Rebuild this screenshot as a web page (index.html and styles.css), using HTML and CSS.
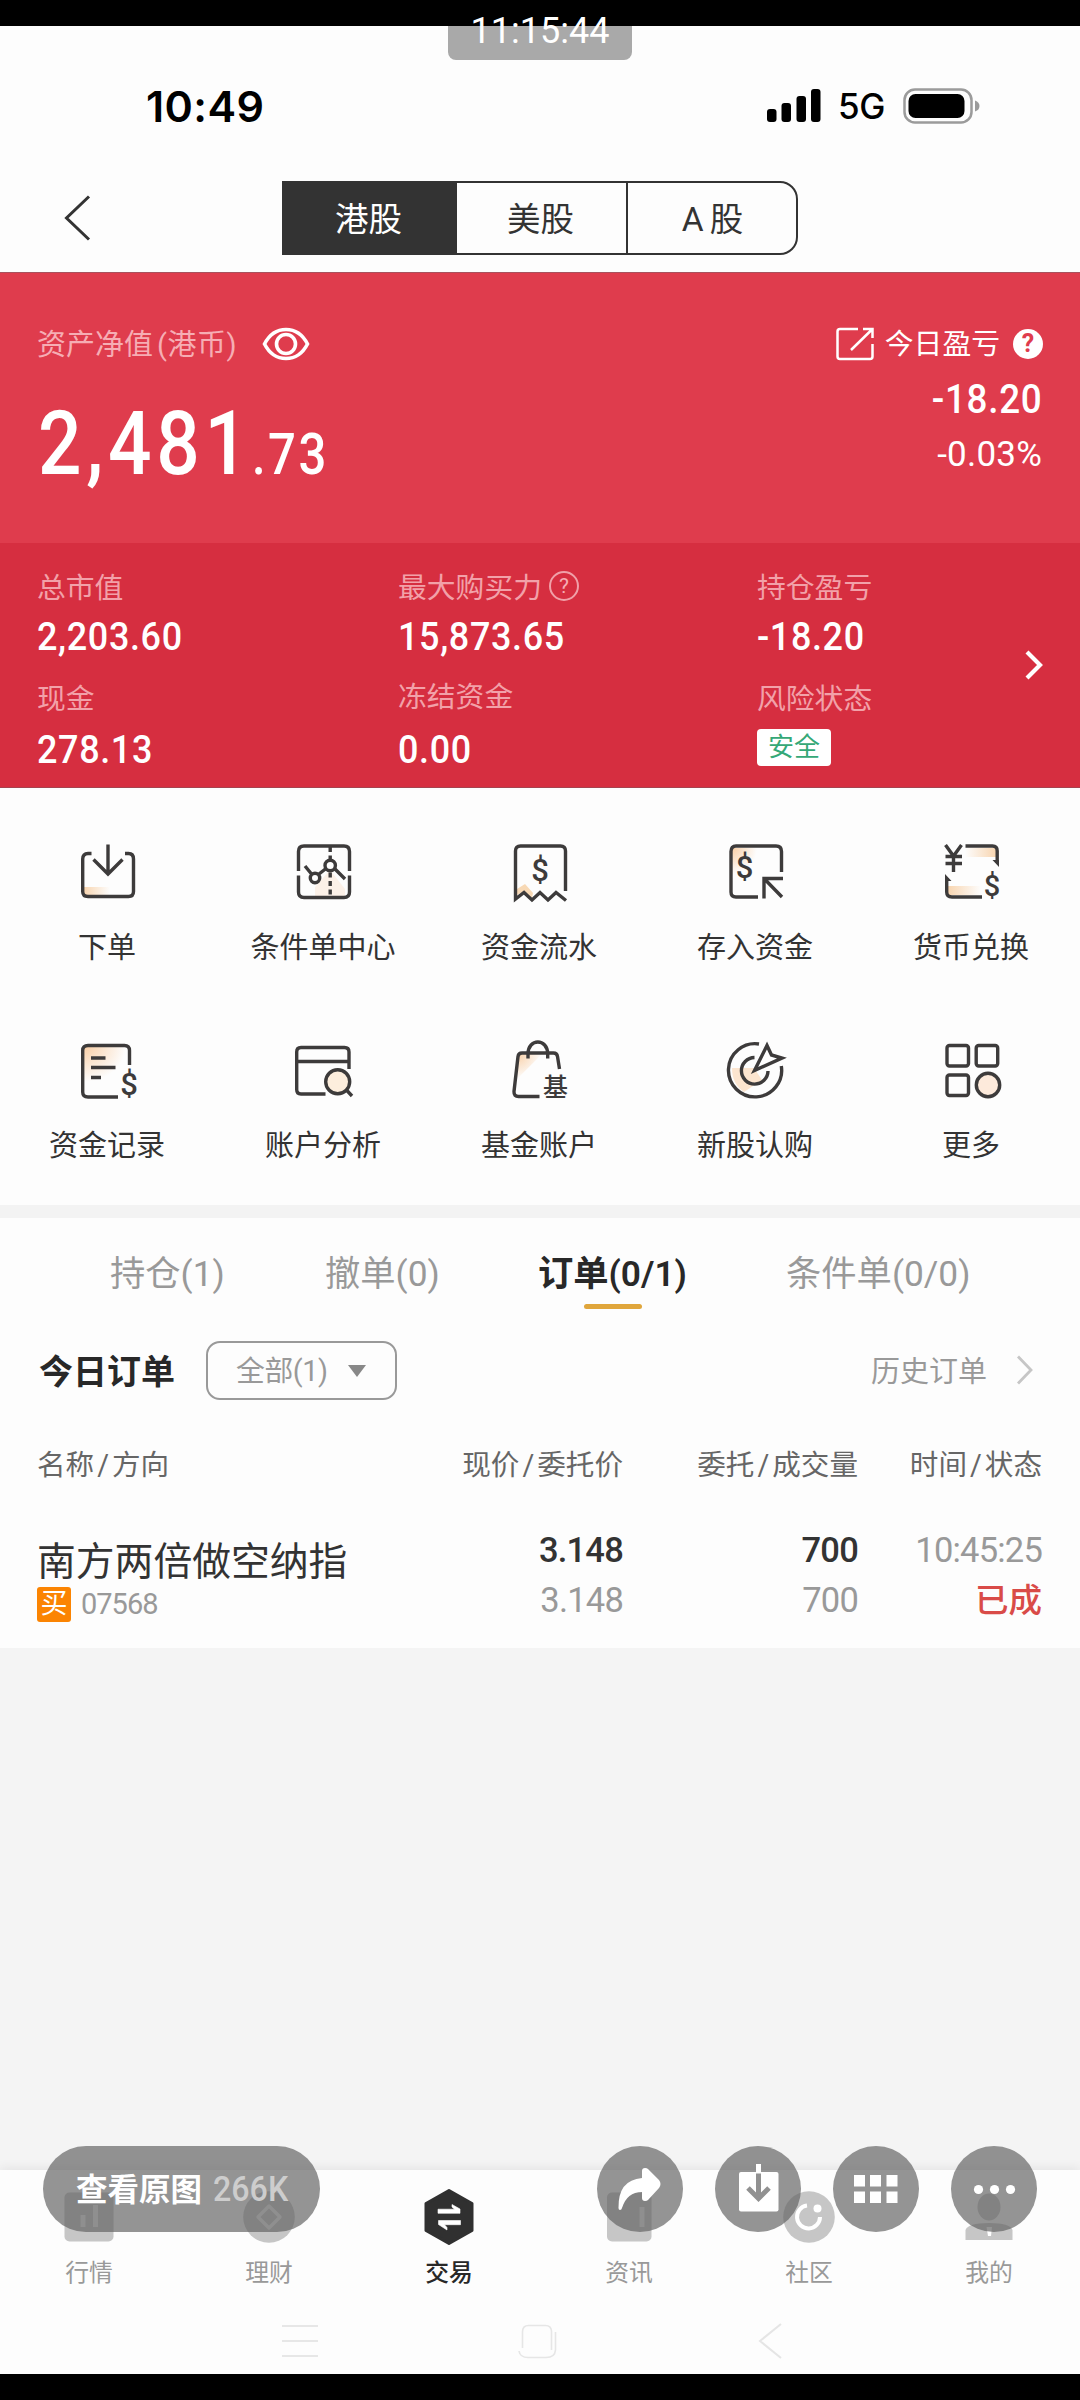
FILE: index.html
```html
<!DOCTYPE html>
<html lang="zh-CN">
<head>
<meta charset="utf-8">
<title>交易</title>
<link rel="stylesheet" href="styles.css">
</head>
<body>
<svg width="0" height="0" class="defs">
  <defs>
    <linearGradient id="warm" x1="0" y1="0" x2="1" y2="0"><stop offset="0" stop-color="#f8d5b0"/><stop offset="1" stop-color="#f8d5b0" stop-opacity="0"/></linearGradient>
    <linearGradient id="warmR" x1="1" y1="0" x2="0" y2="0"><stop offset="0" stop-color="#f8d5b0"/><stop offset="1" stop-color="#f8d5b0" stop-opacity="0"/></linearGradient>
    <radialGradient id="warmTL" cx="0" cy="0" r="1"><stop offset="0" stop-color="#f9cfa6"/><stop offset="1" stop-color="#f9cfa6" stop-opacity="0"/></radialGradient>
  </defs>
</svg>
<div class="screen">
  <header class="status">
    <span class="time">10:49</span>
    <div class="signals">
      <svg width="54" height="36" viewBox="0 0 54 36"><rect y="21" width="9.500" height="13" rx="3"/><rect x="14.500" y="15" width="9.500" height="19" rx="3"/><rect x="29.500" y="8" width="9.500" height="26" rx="3"/><rect x="44" y="1" width="9.500" height="33" rx="3"/></svg>
      <span class="net">5G</span>
      <svg width="78" height="36" viewBox="0 0 78 36"><rect x="1.500" y="1.500" width="67" height="33" rx="10.500" fill="none" stroke="#9b9b9b" stroke-width="2.500"/><rect x="5.500" y="6" width="56" height="24" rx="7"/><path d="M72 12.500q4.500 1.500 4.500 5.500t-4.500 5.500z" fill="#9b9b9b"/></svg>
    </div>
  </header>
  <nav class="market">
    <svg class="back" width="30" height="50" viewBox="0 0 30 50"><path d="M27 3.500 4.500 25 27 46.500" fill="none" stroke="#333" stroke-width="3"/></svg>
    <div class="segments"><span class="seg on">港股</span><span class="seg">美股</span><span class="seg a">A 股</span></div>
  </nav>

  <section class="assets">
    <div class="net-worth">
      <div class="label-line"><span>资产净值</span><span class="paren">(港币)</span>
        <svg width="48" height="34" viewBox="0 0 48 34" fill="none" stroke="#fff" stroke-width="3.600"><path d="M2.500 17Q10 2.500 24 2.500T45.500 17Q38 31.500 24 31.500T2.500 17Z"/><circle cx="24" cy="17" r="9.500"/></svg>
      </div>
      <div class="amount">2,481<small>.73</small></div>
    </div>
    <div class="today">
      <div class="today-title">
        <svg width="38" height="34" viewBox="0 0 38 34" fill="none" stroke="#fff" stroke-width="2.500"><path d="M22 2H4Q1.500 2 1.500 4.500V29.500Q1.500 32 4 32H34Q36.500 32 36.500 29.500V17M27 2H36.500V11M36.500 2 15 23"/></svg>
        <span>今日盈亏</span>
        <span class="help solid">?</span>
      </div>
      <div class="today-value">-18.20</div>
      <div class="today-rate">-0.03%</div>
    </div>
  </section>

  <section class="stats">
    <div class="stat"><span class="k">总市值</span><b>2,203.60</b></div>
    <div class="stat"><span class="k">最大购买力<span class="help">?</span></span><b>15,873.65</b></div>
    <div class="stat"><span class="k">持仓盈亏</span><b>-18.20</b></div>
    <div class="stat low"><span class="k">现金</span><b>278.13</b></div>
    <div class="stat low"><span class="k raised">冻结资金</span><b>0.00</b></div>
    <div class="stat low"><span class="k">风险状态</span><span class="safe">安全</span></div>
    <svg class="more" width="20" height="34" viewBox="0 0 20 34"><path d="M3 4 16 17 3 30" fill="none" stroke="#fff" stroke-width="4.200"/></svg>
  </section>

  <section class="actions">
    <div class="action"><svg class="ico" viewBox="0 0 64 64"><path d="M8 46H34V54H8Z" fill="url(#warm)" stroke="none"/><path d="M15.500 12.500H12Q6.700 12.500 6.700 18V50.500Q6.700 55.500 12 55.500H52.500Q57.500 55.500 57.500 50.500V18Q57.500 12.500 52.500 12.500H49M32 3.500V32M17.500 18.500 32 33 46.500 18.500"/></svg><span>下单</span></div>
    <div class="action"><svg class="ico" viewBox="0 0 64 64"><path d="M23 46 38 29 53 48V56H23Z" fill="#fbe9da" stroke="none" opacity=".6"/><path d="M6.500 30V10.500Q6.500 5 12 5H52Q57.500 5 57.500 10.500V30M6.500 34.500V51Q6.500 56.500 12 56.500H52Q57.500 56.500 57.500 51V34.500"/><path d="M38.200 6V56" stroke-dasharray="5 3.500"/><path d="M13 25 19.500 33M27 33 34 27.500M42.500 27.500 53 38"/><circle cx="23" cy="37" r="4.700" fill="#fff"/><circle cx="38.200" cy="24.500" r="5.200" fill="#fff"/></svg><span>条件单中心</span></div>
    <div class="action"><svg class="ico" viewBox="0 0 64 64"><path d="M9 54V48L17 43 25 52 24 57 16 50Z" fill="#f8d9b5" stroke="none"/><path d="M57.500 50V10Q57.500 5 52.500 5H12.500Q7.500 5 7.500 10V58L16 51.500 24 59 32 51.500 40 59 48 51.500 58 59.500"/><text x="32" y="39.500" font-size="31">$</text></svg><span>资金流水</span></div>
    <div class="action"><svg class="ico" viewBox="0 0 64 64"><rect x="8" y="7" width="25" height="26" fill="url(#warmTL)" stroke="none"/><path d="M57.500 31V10.500Q57.500 5 52 5H12Q7 5 7 10.500V51Q7 56 12 56H34M40 57.500V37.500H59M40.500 38 58 56"/><text x="20.500" y="37" font-size="31">$</text></svg><span>存入资金</span></div>
    <div class="action"><svg class="ico" viewBox="0 0 64 64"><rect x="25" y="7" width="31" height="9" fill="url(#warmR)" stroke="none"/><rect x="8" y="45" width="33" height="9" fill="url(#warm)" stroke="none"/><path d="M25.500 5H52.500Q57.200 5 57.200 10V22M6.700 37V51Q6.700 56 12 56H42M5.500 4 13.500 15 21.500 4M13.500 15V31M5.500 15.500H22M5.500 22.500H22"/><path d="M59 26 52.500 19H59ZM5 33 11.500 40H5Z" fill="#3d3b3b" stroke="none"/><text x="52" y="54.500" font-size="29">$</text></svg><span>货币兑换</span></div>
    <div class="action"><svg class="ico" viewBox="0 0 64 64"><rect x="8" y="7" width="42" height="36" fill="url(#warmTL)" stroke="none"/><path d="M53.500 26V11.500Q53.500 6.500 48.500 6.500H12Q6.700 6.500 6.700 11.500V53Q6.700 58 12 58H42M15 19H29.500M15 28.500H39.500M15 38.500H25"/><text x="53" y="56" font-size="31">$</text></svg><span>资金记录</span></div>
    <div class="action"><svg class="ico" viewBox="0 0 64 64"><path d="M57 30V13Q57 8.500 52.500 8.500H9Q4.700 8.500 4.700 13V50.500Q4.700 55 9 55H33.500M4.700 22.500H57"/><circle cx="45.700" cy="42.700" r="12" fill="#fdeedd"/><path d="M54 50.500 60 57"/></svg><span>账户分析</span></div>
    <div class="action"><svg class="ico" viewBox="0 0 64 64"><path d="M10 15H34L9 40Z" fill="url(#warmTL)" stroke="none"/><path d="M51.500 30 49.500 17.500Q49 14 45.500 14H14Q10.500 14 10 17.500L6 52.500Q5.800 57.500 10.500 57.500H31.500M20 19.500V15C20 -1 39.700 -1 39.700 15V19.500"/><text x="47.500" y="57" class="cjk" font-size="25">基</text></svg><span>基金账户</span></div>
    <div class="action"><svg class="ico" viewBox="0 0 64 64"><path d="M8 29H30L38 41 20 53Q8 45 8 29" fill="#fbdfc3" stroke="none" opacity=".8"/><path d="M35 5A26.600 26.600 0 1 0 57.300 27M30.500 18.500A13.300 13.300 0 1 0 44 32"/><path d="M30.500 31.500 43 6.500 47.500 16 58 19Z" fill="#fff"/></svg><span>新股认购</span></div>
    <div class="action"><svg class="ico" viewBox="0 0 64 64"><rect x="7" y="6.500" width="21.500" height="20.500" rx="2.500"/><rect x="36.200" y="6.500" width="21.500" height="20.500" rx="2.500"/><rect x="7" y="36" width="21.500" height="20.500" rx="2.500"/><circle cx="48" cy="46" r="11.700" fill="#fdeadb"/></svg><span>更多</span></div>
  </section>

  <section class="orders">
    <div class="tabs"><span class="tab">持仓(1)</span><span class="tab">撤单(0)</span><span class="tab on">订单(0/1)</span><span class="tab">条件单(0/0)</span></div>
    <div class="filter">
      <strong>今日订单</strong>
      <div class="select">全部(1)<i class="tri"></i></div>
      <span class="history">历史订单</span>
      <svg width="18" height="32" viewBox="0 0 18 32"><path d="M2 2.500 15 16 2 29.500" fill="none" stroke="#c6c6c6" stroke-width="2.800"/></svg>
    </div>
    <div class="row head"><span>名称<i>/</i>方向</span><span>现价<i>/</i>委托价</span><span>委托<i>/</i>成交量</span><span>时间<i>/</i>状态</span></div>
    <div class="row order">
      <div class="name"><span>南方两倍做空纳指</span><div class="code"><em>买</em>07568</div></div>
      <div class="nums"><b>3.148</b><span>3.148</span></div>
      <div class="nums"><b>700</b><span>700</span></div>
      <div class="nums"><span>10:45:25</span><span class="done">已成</span></div>
    </div>
  </section>

  <footer class="dock">
    <div class="dock-tabs">
      <div class="dock-tab"><svg class="dico" viewBox="0 0 56 60"><rect x="3.500" y="5.500" width="49" height="49" rx="5"/><path d="M22 28V40M34.500 18V40" stroke="#eee" stroke-width="5"/></svg><span>行情</span></div>
      <div class="dock-tab"><svg class="dico" viewBox="0 0 56 60"><circle cx="28" cy="30" r="25.800"/><path d="M28 19 39 30 28 41 17 30Z" fill="none" stroke="#eee" stroke-width="3.500" stroke-linejoin="round"/></svg><span>理财</span></div>
      <div class="dock-tab on"><svg class="dico" viewBox="0 0 56 60"><path d="M28 3.500 51 16.500V43.500L28 56.500 5 43.500V16.500Z" fill="#303030" stroke="#303030" stroke-width="3" stroke-linejoin="round"/><path d="M17 26.300H39V22L31 17.500V20L33.500 22.200H17ZM39.500 33.500H17.500V37.500L26 43V40.500L23.500 37.700H39.500Z" fill="#fff" stroke="#fff" stroke-width=".6"/></svg><span>交易</span></div>
      <div class="dock-tab"><svg class="dico" viewBox="0 0 56 60"><rect x="6" y="5.500" width="44.500" height="49" rx="5"/><path d="M41 20V40" stroke="#eee" stroke-width="5"/></svg><span>资讯</span></div>
      <div class="dock-tab"><svg class="dico" viewBox="0 0 56 60"><circle cx="28" cy="30" r="25.800"/><path d="M26 18.500A11.500 11.500 0 1 0 39 30" fill="none" stroke="#fff" stroke-width="4"/><circle cx="36.500" cy="21.500" r="4" fill="#fff"/></svg><span>社区</span></div>
      <div class="dock-tab"><svg class="dico" viewBox="0 0 56 60"><ellipse cx="28" cy="20" rx="11.500" ry="13.500"/><path d="M4.500 43Q7 36 28 36T51.500 43V53H4.500Z"/><path d="M25.500 40H31L30 49H27Z" fill="#fff"/></svg><span>我的</span></div>
    </div>
    <div class="system-nav">
      <svg width="38" height="40" viewBox="0 0 38 40"><path d="M1 6H37M1 21H37M1 36H37" stroke="#e7e7e7" stroke-width="2"/></svg>
      <svg width="40" height="40" viewBox="0 0 40 40" fill="none"><path d="M2 31Q3 37.500 11 37.500H29Q38 37.500 38.500 30V12" stroke="#e6e6e6" stroke-width="1.600"/><path d="M5.500 28V12Q5.500 5.500 11.500 5.500H28.500Q34 5.500 34.500 11V30" stroke="#e6e6e6" stroke-width="1.600"/></svg>
      <svg width="30" height="40" viewBox="0 0 30 40"><path d="M27 4 6 21 27 38" fill="none" stroke="#e5e5e5" stroke-width="2"/></svg>
    </div>
  </footer>
</div>

<div class="clock">11:15:44</div>
<div class="viewer">
  <div class="original"><b>查看原图</b><span>266K</span></div>
  <div class="round"><svg viewBox="0 0 86 86" fill="#fff"><path d="M45 32V25Q45 22 48 22 50 22 51 23L62 34Q65 38 62 42L51 54Q50 55 48 55 45 55 45 52V46Q30 46 25 62 24.500 64 23 64 21.500 64 21.500 62 21 34 45 32Z"/></svg></div>
  <div class="round"><svg viewBox="0 0 86 86"><rect x="24" y="26" width="39.500" height="39.500" rx="2" fill="#fff"/><rect x="41" y="18" width="5" height="9" fill="#fff"/><path d="M43.500 27.500V52M33 42 43.500 52.500 54 42" fill="none" stroke="#919191" stroke-width="5"/></svg></div>
  <div class="round"><svg viewBox="0 0 86 86" fill="#fff"><path d="M21 29h11v11.500H21zM37 29h11v11.500H37zM53.500 29h11v11.500h-11zM21 45.500h11V57H21zM37 45.500h11V57H37zM53.500 45.500h11V57h-11z"/></svg></div>
  <div class="round"><svg viewBox="0 0 86 86" fill="#fff"><circle cx="27.500" cy="43.500" r="4.600"/><circle cx="43.500" cy="43.500" r="4.600"/><circle cx="59.500" cy="43.500" r="4.600"/></svg></div>
</div>
</body>
</html>
```
FILE: styles.css
```css
* { box-sizing: border-box; }
body {
  margin: 0;
  width: 1080px;
  height: 2400px;
  position: relative;
  background: #000;
  padding: 26px 0;
  overflow: hidden;
  font-family: Roboto, "Noto Sans CJK SC", sans-serif;
  color: #333;
}
svg { display: block; flex: none; }
i, em { font-style: normal; }
.defs { position: absolute; }
.screen { height: 2348px; background: #f4f4f4; display: flex; flex-direction: column; }

/* status bar and market switch */
.status { height: 144px; background: #fdfdfd; display: flex; justify-content: space-between; align-items: flex-start; padding: 60px 99px 0 146px; color: #000; }
.time { font: 600 43px/42px Inter, sans-serif; letter-spacing: .4px; margin-top: -1px; }
.signals { display: flex; align-items: center; padding-top: 1px; }
.net { font: 500 35px/36px Inter, sans-serif; letter-spacing: -.5px; width: 50px; margin: 1px 15px 0 17px; }
.market { height: 102px; background: #fdfdfd; display: flex; align-items: flex-start; padding: 11px 0 0 62px; }
.back { margin-top: 12px; }
.segments { display: flex; width: 516px; height: 74px; margin-left: 190px; border: 2px solid #333; border-radius: 0 18px 18px 0; overflow: hidden; }
.seg { flex: none; width: 171px; display: flex; align-items: center; justify-content: center; font-size: 33.500px; line-height: 40px; padding: 3px 2px 0 0; }
.seg.a { word-spacing: -2px; padding-right: 0; }
.seg + .seg { border-left: 2px solid #333; }
.seg.on { background: #333; color: #fff; }

/* account totals */
.assets { height: 271px; background: #df3c4d; border-top: 1px solid #a8525d; padding: 51px 38px 0 37px; display: flex; justify-content: space-between; color: #fff; }
.label-line { display: flex; align-items: center; height: 40px; font-size: 29px; color: #f6adb4; }
.label-line span { margin-top: -5px; }
.label-line .paren { margin: -5px 25px 0 4px; letter-spacing: .5px; }
.amount { font-size: 89px; line-height: 100px; font-weight: 500; letter-spacing: 5.500px; margin: 30px 0 0 1px; transform: scaleX(.86); transform-origin: left; white-space: nowrap; }
.amount small { font-size: 57px; letter-spacing: 3px; margin-left: -1px; }
.today { display: flex; flex-direction: column; align-items: flex-end; }
.today-title { display: flex; align-items: center; height: 40px; font-size: 28.800px; }
.today-title > svg { margin-right: 11px; }
.today-title > span:not(.help) { margin-top: -5px; }
.help { display: flex; align-items: center; justify-content: center; width: 30px; height: 30px; border-radius: 50%; border: 2px solid #f0a0a8; font-size: 21px; line-height: 26px; color: #f6adb4; margin: 1px 0 0 7px; }
.help.solid { background: #fff; border: 0; color: #df3c4d; font-size: 25px; font-weight: 700; margin: 0 -1px 0 13px; }
.today-value { font-size: 40px; line-height: 46px; margin-top: 13px; letter-spacing: .8px; transform: scaleX(.92); transform-origin: right; font-weight: 500; }
.today-rate { font-size: 35px; line-height: 42px; margin-top: 11px; letter-spacing: .2px; }

.stats { height: 245px; background: #d62e40; border-bottom: 1px solid #a5434f; position: relative; display: grid; grid-template-columns: 361px 359px 1fr; grid-template-rows: 112px 110px; padding: 21px 0 0 37px; color: #fff; }
.stat { display: flex; flex-direction: column; align-items: flex-start; }
.k { display: flex; align-items: center; height: 42px; font-size: 28.800px; color: #f2a1a9; }
.low .k { margin-top: -1px; }
.k.raised { position: relative; top: -2px; }
.stat b { font-size: 39.500px; line-height: 46px; font-weight: 500; letter-spacing: .7px; margin-top: 8px; transform: scaleX(.91); transform-origin: left; }
.stat.low b { margin-top: 10px; }
.safe { width: 74px; height: 37px; border-radius: 4px; background: #fff; color: #35a877; font-size: 26px; line-height: 36px; text-align: center; margin-top: 12px; }
.more { position: absolute; left: 1024px; top: 105px; }

/* shortcuts */
.actions { height: 417px; background: #fdfdfd; display: grid; grid-template-columns: repeat(5, 1fr); grid-template-rows: 198px 198px; padding-top: 53px; }
.action { display: flex; flex-direction: column; align-items: center; font-size: 29px; line-height: 40px; }
.action span { margin-left: -2px; }
.ico { width: 64px; height: 64px; margin-bottom: 23px; fill: none; stroke: #3d3b3b; stroke-width: 3.400; }
.ico text { fill: #3d3b3b; stroke: none; text-anchor: middle; font-family: Roboto, sans-serif; font-weight: 500; }
.ico text.cjk { font-family: "Noto Sans CJK SC", sans-serif; }

/* orders */
.orders { height: 443px; background: #fdfdfd; border-top: 13px solid #f3f3f3; }
.tabs { height: 100px; display: flex; align-items: flex-start; padding: 31px 0 0 110px; font-size: 35.300px; line-height: 50px; color: #999; }
.tab { height: 62px; white-space: nowrap; }
.tab:nth-child(1) { width: 215px; }
.tab:nth-child(2) { width: 213px; }
.tab:nth-child(3) { width: 149px; margin-right: 99px; display: flex; flex-direction: column; align-items: center; }
.tab.on { color: #282828; font-weight: 600; }
.tab.on::after { content: ""; width: 58px; height: 5px; border-radius: 3px; background: #e0a63c; margin-top: 5px; flex: none; }
.filter { height: 106px; display: flex; align-items: center; padding: 0 46px 2px 39px; }
.filter strong { font-size: 34px; font-weight: 600; color: #282828; margin-top: -2px; }
.select { margin-left: 31px; width: 191px; height: 59px; border: 2px solid #999; border-radius: 14px; display: flex; align-items: center; padding: 0 0 3px 28px; font-size: 28.800px; letter-spacing: -.4px; color: #999; }
.tri { border: 9px solid transparent; border-top: 12px solid #888; border-bottom: 0; margin: 4px 0 0 20px; }
.history { margin: -2px 29px 0 auto; font-size: 29px; color: #999; }
.row { display: grid; grid-template-columns: 300px 286px 235px 184px; padding-left: 37px; text-align: right; }
.row > :first-child { text-align: left; }
.head { height: 68px; padding-top: 21px; font-size: 28.600px; line-height: 40px; color: #666; }
.head i { margin: 0 3px; }
.order { padding-top: 45px; }
.name { font-size: 38.800px; line-height: 50px; white-space: nowrap; }
.code { display: flex; align-items: center; height: 34px; font-size: 29px; color: #999; letter-spacing: -1px; }
.code em { width: 34px; height: 35px; border-radius: 3px; background: #fb8402; color: #fff; font-size: 27px; line-height: 34px; text-align: center; margin-right: 10px; letter-spacing: 0; }
.nums { display: flex; flex-direction: column; font-size: 34.500px; line-height: 50px; color: #999; letter-spacing: -.8px; margin-top: -12px; }
.nums b { font-weight: 500; color: #333; }
.nums .done { color: #d94b48; font-size: 33.500px; letter-spacing: 0; font-weight: 500; padding-top: 1px; }

/* bottom bar */
.dock { margin-top: auto; height: 204px; background: #fdfdfd; box-shadow: 0 -2px 10px rgba(0,0,0,.07); }
.dock-tabs { display: flex; padding-top: 17px; height: 130px; margin-left: -1px; width: 1080px; }
.dock-tab { flex: 1; display: flex; flex-direction: column; align-items: center; font-size: 23.800px; line-height: 34px; color: #999; }
.dock-tab.on { color: #282828; font-weight: 500; }
.dico { width: 56px; height: 60px; fill: #c6c6c6; margin-bottom: 9px; }
.system-nav { display: flex; justify-content: space-between; padding: 20px 296px 0 281px; }

/* photo viewer controls over the page */
.clock { position: absolute; left: 448px; top: 0; width: 184px; height: 60px; border-radius: 0 0 8px 8px; background: linear-gradient(#000 26px, #a9a9a9 26px); color: #fff; font-size: 36px; line-height: 63px; text-align: center; }
.viewer { position: absolute; left: 43px; top: 2146px; width: 994px; display: flex; gap: 32px; }
.original { width: 277px; height: 86px; border-radius: 43px; background: rgba(98,98,98,.68); color: #fff; display: flex; align-items: center; padding: 0 0 4px 33px; font-size: 31.500px; margin-right: auto; }
.original span { margin: 4px 0 0 11px; font-size: 35px; color: #cdcdcd; font-weight: 500; transform: scaleX(.92); transform-origin: left; }
.round { width: 86px; height: 86px; border-radius: 50%; background: rgba(98,98,98,.68); }
```
